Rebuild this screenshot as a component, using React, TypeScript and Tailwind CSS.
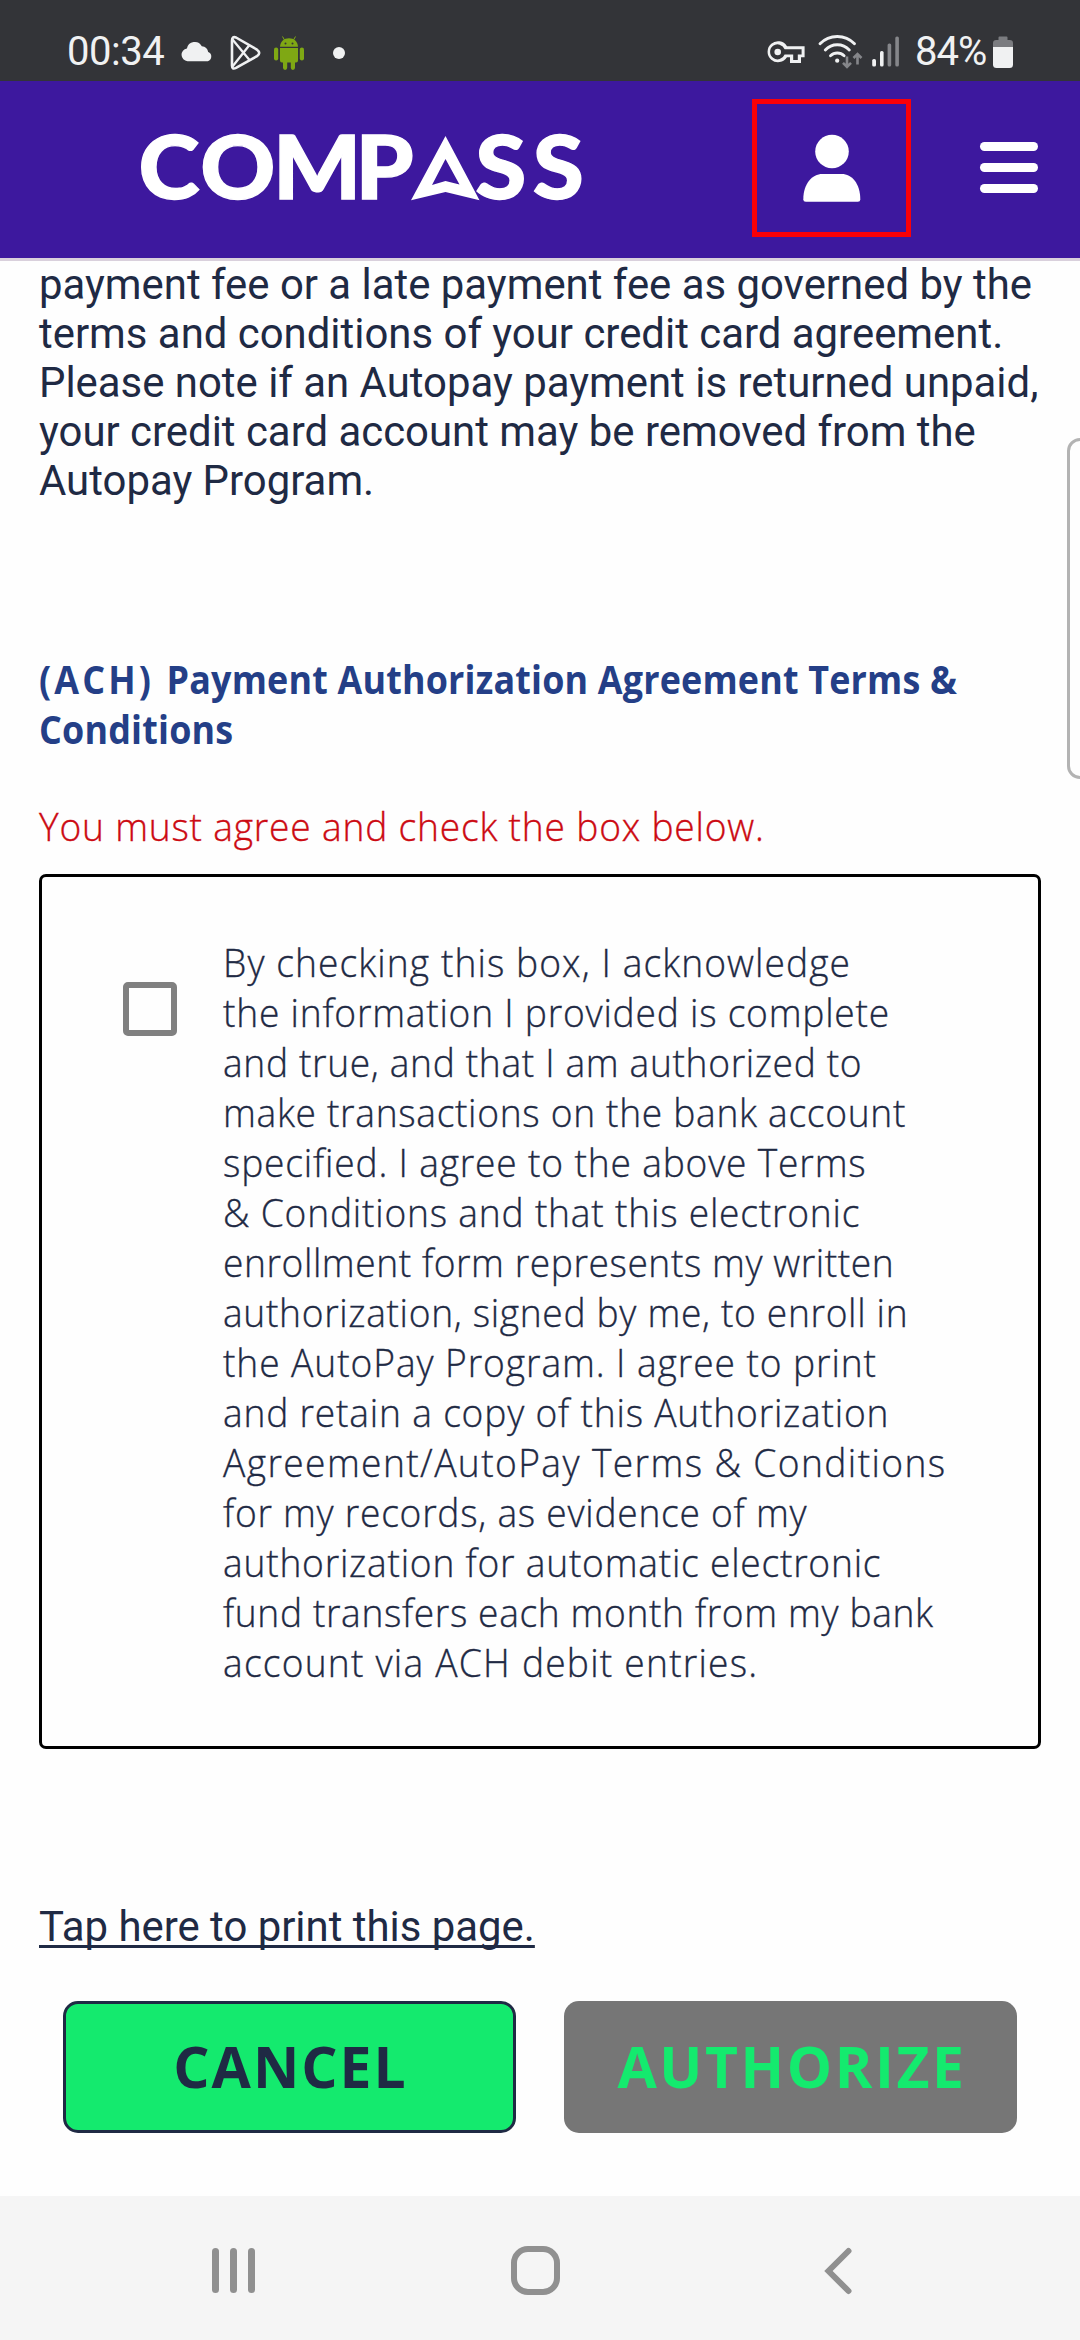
const agreementLines: [string, string][] = [
  ["By checking this box, I acknowledge", "tracking-[1.13px]"],
  ["the information I provided is complete", "tracking-[0.81px]"],
  ["and true, and that I am authorized to", "tracking-[0.68px]"],
  ["make transactions on the bank account", "tracking-[0.72px]"],
  ["specified. I agree to the above Terms", "tracking-[0.86px]"],
  ["& Conditions and that this electronic", "tracking-[0.83px]"],
  ["enrollment form represents my written", "tracking-[0.6px]"],
  ["authorization, signed by me, to enroll in", "tracking-[0.7px]"],
  ["the AutoPay Program. I agree to print", "tracking-[0.96px]"],
  ["and retain a copy of this Authorization", "tracking-[0.84px]"],
  ["Agreement/AutoPay Terms & Conditions", "tracking-[1.46px]"],
  ["for my records, as evidence of my", "tracking-[0.78px]"],
  ["authorization for automatic electronic", "tracking-[0.81px]"],
  ["fund transfers each month from my bank", "tracking-[0.66px]"],
  ["account via ACH debit entries.", "tracking-[1.28px]"],
];

function StatusBar() {
  return (
    <div className="flex h-[81px] items-start justify-between bg-[#333438] pt-[34px] pl-[67px] pr-[66px] text-[#f0f1f2]">
      <div className="flex items-start">
        <span className="mt-[-2px] w-[100px] text-[40px] leading-[40px] tracking-[-0.5px]">00:34</span>
        <svg className="ml-[13px]" width="36" height="36" viewBox="180 34 36 36" fill="currentColor">
          <path d="M187.500 61.200a6.400 6.400 0 0 1-.6-12.700 8 8 0 0 1 14.900-2.300 7 7 0 0 1 6.400 5.900 4.800 4.800 0 0 1-.4 9.100z" />
        </svg>
        <svg className="ml-[12px]" width="36" height="36" viewBox="228 34 36 36" fill="none" stroke="currentColor" strokeWidth="2.600" strokeLinejoin="round">
          <path d="M232 41v24.500q0 4.400 4 2.300l21-11.700q4.400-3.200 0-6.400L236 37.500q-4-1.600-4 3.500z" />
          <path d="M232.500 39.500 249.500 60M232.500 66.500 249.500 45" strokeWidth="2.300" />
        </svg>
        <svg className="ml-[8px]" width="36" height="38" viewBox="272 34 36 38" fill="#7fa814">
          <path d="M280 46.800c.3-5.600 4-8.600 9-8.600s8.700 3 9 8.600z" />
          <path d="M284.500 40l-2-3.500M293.500 40l2-3.500" stroke="#7fa814" strokeWidth="1" />
          <path d="M280 48h18v12.500q0 2-2 2h-1v5.300a2.100 2.100 0 0 1-4.200 0v-5.300h-3.600v5.300a2.100 2.100 0 0 1-4.200 0v-5.300h-1q-2 0-2-2z" />
          <rect x="274" y="47.500" width="4.200" height="13" rx="2.100" />
          <rect x="299.800" y="47.500" width="4.200" height="13" rx="2.100" />
          <circle cx="285.500" cy="43.500" r="1" fill="#333438" />
          <circle cx="292.500" cy="43.500" r="1" fill="#333438" />
        </svg>
        <span className="mt-[13px] ml-[25px] size-3 rounded-full bg-[#f0f1f2]" />
      </div>
      <div className="flex items-start">
        <svg width="40" height="36" viewBox="768 34 40 36">
          <path
            d="M788 46.200H805.600V57.200H802V63H791V57.200H788A10.500 10.500 0 1 1 788 46.200z M785.600 49.200A7.500 7.500 0 1 0 785.600 54.500H794.200V60H798.800V54.500H802.600V49.200z"
            fill="currentColor"
            fillRule="evenodd"
          />
          <circle cx="778.700" cy="52" r="3.300" fill="currentColor" />
        </svg>
        <svg className="ml-[9px]" width="48" height="36" viewBox="816 34 48 36" fill="none" stroke="currentColor" strokeWidth="2.900" strokeLinecap="round">
          <path d="M820 43.800a24 24 0 0 1 34.500 0M825.300 50a16.500 16.500 0 0 1 24 0M830.500 55.700a9.800 9.800 0 0 1 13.600 0" />
          <circle cx="837.200" cy="60.700" r="2.100" fill="currentColor" stroke="none" />
          <path d="M847 56.500v10M843 62.800l4 4 4-4M857.500 64.500v-10M853.500 58l4-4 4 4" stroke="#85868a" strokeWidth="2.600" strokeLinecap="butt" />
        </svg>
        <svg className="ml-[6px]" width="30" height="36" viewBox="870 34 30 36" fill="currentColor">
          <rect x="872.200" y="59" width="3.800" height="7.500" rx="1.600" />
          <rect x="880" y="51" width="3.600" height="15.500" rx="1.600" />
          <rect x="887.600" y="43.500" width="3.600" height="23" rx="1.600" fill="#85868a" />
          <rect x="895.300" y="36.500" width="3.600" height="30" rx="1.600" fill="#85868a" />
        </svg>
        <span className="mt-[-2px] ml-[15px] w-[73px] text-[40px] leading-[40px] tracking-[-1px]">84%</span>
        <svg className="ml-[4px]" width="22" height="36" viewBox="992 34 22 36">
          <path d="M998.500 37.500q0-1 1-1h7q1 0 1 1V40h2.300q3.200 0 3.200 3.200V47h-20v-3.800q0-3.200 3.200-3.200h2.300z" fill="#7b7c80" />
          <path d="M993 47h20v17.500q0 3.500-3.500 3.500h-13q-3.500 0-3.500-3.500z" fill="#f0f1f2" />
        </svg>
      </div>
    </div>
  );
}

function Header() {
  return (
    <header className="flex h-[180px] items-start justify-between border-b-[3px] border-[#d9d0dc] bg-[#3d189e] pt-[18px] pr-[42px] pl-[132px]">
      <svg className="mt-[30px]" width="460" height="80" viewBox="132 129 460 80" fill="#fff">
        <text
          y="199"
          x="130.700 189 257.600 335.300 389 448.300 502.600"
          transform="scale(1.060 1)"
          fontFamily="Lato, sans-serif"
          fontWeight="900"
          fontSize="87.500"
          stroke="#fff"
          strokeWidth="1.300"
        >
          COMP<tspan fill="transparent" stroke="none">A</tspan>SS
        </text>
        <path fillRule="evenodd" d="M445.500 136 479.500 200.300 445.500 192 411 200.300zM445.500 159 432 185 445.500 181 459.500 184.500z" />
      </svg>
      <div className="flex items-start">
        <button className="flex h-[138px] w-[159px] justify-center border-[5px] border-[#fb0007] pt-[30px]" aria-label="Account">
          <svg width="60" height="70" viewBox="801.700 133 60 70" fill="#fff">
            <ellipse cx="831.700" cy="150.500" rx="16.800" ry="16.700" />
            <path d="M803 198.500c0-16 9-25.500 19-25.500h19.500c10 0 18.500 9.500 18.500 25.500q0 2.300-2.500 2.300h-52q-2.500 0-2.500-2.300z" />
          </svg>
        </button>
        <button className="mt-[43px] ml-[69px] flex w-[58px] flex-col gap-[12px]" aria-label="Menu">
          <span className="h-[9px] w-full rounded-full bg-white" />
          <span className="h-[9px] w-full rounded-full bg-white" />
          <span className="h-[9px] w-full rounded-full bg-white" />
        </button>
      </div>
    </header>
  );
}

function NavigationBar() {
  return (
    <nav className="flex h-[144px] items-start bg-[#f5f5f5] pt-[50px]">
      <div className="ml-[212px] flex h-[47px] w-[43px] justify-between pt-[2px]">
        <span className="w-[7px] rounded-full bg-[#909090]" />
        <span className="w-[7px] rounded-full bg-[#909090]" />
        <span className="w-[7px] rounded-full bg-[#909090]" />
      </div>
      <div className="ml-[256px] h-[49px] w-[49px] rounded-[17px] border-[6px] border-[#909090]" />
      <svg className="ml-[261px]" width="34" height="50" viewBox="820 2246 34 50" fill="none" stroke="#909090" strokeWidth="6" strokeLinecap="round">
        <path d="M847.500 2251 827.500 2271 847.500 2291" />
      </svg>
    </nav>
  );
}

export default function App() {
  return (
    <div className="relative flex h-[2340px] w-[1080px] flex-col overflow-hidden bg-[#fefefe] font-['Roboto',sans-serif] text-[#1f2a44]">
      <StatusBar />
      <Header />
      <main className="flex flex-1 flex-col px-[39px]">
        <p className="mt-[-1px] text-[41.900px] leading-[49px] whitespace-nowrap">
          payment fee or a late payment fee as governed by the
          <br />
          terms and conditions of your credit card agreement.
          <br />
          Please note if an Autopay payment is returned unpaid,
          <br />
          your credit card account may be removed from the
          <br />
          Autopay Program.
        </p>
        <h2 className="mt-[149px] origin-left scale-x-[0.92] font-['Open_Sans',sans-serif] text-[39px] leading-[50px] font-bold tracking-[0.2px] whitespace-nowrap text-[#243f87]">
          <span className="tracking-[3.400px]">(ACH) </span>Payment Authorization Agreement Terms &amp;
          <br />
          Conditions
        </h2>
        <p className="mt-[47px] origin-left scale-x-[0.952] font-['Open_Sans',sans-serif] text-[39px] leading-[50px] font-light tracking-[0.85px] whitespace-nowrap text-[#cc0a12] [-webkit-text-stroke:0.35px]">
          You must agree and check the box below.
        </p>
        <section className="mt-[23px] flex h-[875px] w-[1002px] rounded-[7px] border-[3px] border-black pt-[60px] pl-[81px]">
          <span role="checkbox" aria-checked="false" className="mt-[45px] h-[54px] w-[54px] shrink-0 rounded-[5px] border-[6px] border-[#808080]" />
          <div className="ml-[46px] origin-left scale-x-[0.953] font-['Open_Sans',sans-serif] text-[39px] leading-[50px] font-light whitespace-nowrap [-webkit-text-stroke:0.35px]">
            {agreementLines.map(([line, tracking]) => (
              <div key={line} className={tracking}>
                {line}
              </div>
            ))}
          </div>
        </section>
        <a className="mt-[153px] self-start text-[41.900px] leading-[49px] underline decoration-[2.500px] underline-offset-[4px] [text-decoration-skip-ink:none]">
          Tap here to print this page.
        </a>
        <div className="mt-[50px] flex gap-[48px] pl-[24px] font-['Open_Sans',sans-serif] text-[57px] leading-[60px] font-bold">
          <button className="h-[132px] w-[453px] rounded-[15px] border-[3px] border-[#1f2a44] bg-[#14ea6e] pb-[3px] pl-[2px] tracking-[2px]">CANCEL</button>
          <button className="h-[132px] w-[453px] rounded-[15px] bg-[#767676] pb-[3px] pl-[3px] tracking-[2.600px] text-[#14ea6e]">AUTHORIZE</button>
        </div>
      </main>
      <NavigationBar />
      <aside className="absolute top-[438px] left-[1067px] h-[341px] w-[30px] rounded-[13px] border-[3px] border-[#b3b3b3] bg-[#fefefe]" />
    </div>
  );
}
